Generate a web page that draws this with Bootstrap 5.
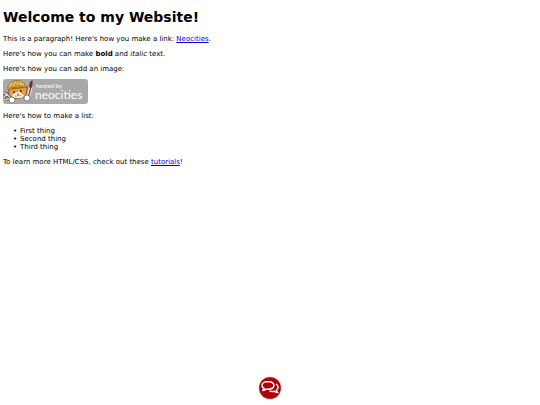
<!DOCTYPE html>
<html lang="en">
<head>
<meta charset="utf-8">
<meta name="viewport" content="width=device-width, initial-scale=1">
<title>Welcome to my Website!</title>
<link href="https://cdn.jsdelivr.net/npm/bootstrap@5.3.0/dist/css/bootstrap.min.css" rel="stylesheet">
<style>
body{font-family:"DejaVu Sans",Verdana,sans-serif;font-size:7px;line-height:8px;color:#000;background:#fff}
main{padding:9px 3px}
h1{font-size:14px;line-height:16px;margin-bottom:10px}
p,.things{margin-bottom:7px}
.things{list-style:none;padding-left:10px}
.things li{display:flex;gap:3px}
.things li::before{content:"•";width:4px}
main a{color:#0000e0}
.before-picture{margin-bottom:6px}
.picture{margin-bottom:8px}
.hosted{width:85px;height:25px}
.chat{width:24px;height:24px;margin-bottom:5px}
.chat svg{width:24px;height:24px}
</style>
</head>
<body class="min-vh-100 d-flex flex-column">
<main class="flex-grow-1">
  <h1 class="fw-bold">Welcome to my Website!</h1>
  <p>This is a paragraph! Here's how you make a link: <a href="#neocities">Neocities</a>.</p>
  <p>Here's how you can make <strong class="fw-bold">bold</strong> and <em>italic</em> text.</p>
  <p class="before-picture">Here's how you can add an image:</p>
  <div class="picture">
    <svg class="hosted d-block" viewBox="0 0 85 25" role="img" aria-label="hosted by neocities">
      <rect width="85" height="25" rx="3" fill="#a9a9a9"/>
      <!-- tools and paws -->
      <path d="M1 14l3 1 5 6M1 18l3-3M3 21l4-2" stroke="#444" stroke-width="3" fill="none"/>
      <path d="M1 14l3 1 5 6M1 18l3-3M3 21l4-2" stroke="#ddd" stroke-width="1.4" fill="none"/>
      <path d="M25 19L28 8" stroke="#fff" stroke-width="3"/>
      <path d="M25 19L28 8" stroke="#654638" stroke-width="1.3"/>
      <path d="M26.500 8q-.5-4 2.500-6.500 1 4-1 7.500z" fill="#8e2620" stroke="#4a2020" stroke-width=".6"/>
      <!-- cat -->
      <path d="M6 10L5.500 15q2 4.500 8.500 4.500 7 0 9-4l1.500-8-3 1z" fill="#ee9b45" stroke="#70401f" stroke-width=".7"/>
      <path d="M14 13q-3 1-5 3.500 2 2.700 6.500 2.700 4 0 6-2.700-3-1-5-4z" fill="#fff4e2"/>
      <path d="M5 11q-1-7 6-9 8-2 11 4l1 3q-4-2-9-1-5 0-9 3z" fill="#f3c34c" stroke="#8c601c" stroke-width=".8"/>
      <path d="M8 8l3-5M12 7l2-5M16 6V3M6 9q8-4 16-2" stroke="#ad7623" stroke-width=".8" fill="none"/>
      <circle cx="11" cy="13" r="1" fill="#402c20"/><circle cx="18" cy="12" r="1" fill="#402c20"/>
      <path d="M14 15h2l-1 1zM12 17q2 .8 3-1 1 1.500 3 .5" fill="none" stroke="#7a5140" stroke-width=".6"/>
      <circle cx="9" cy="21" r="3" fill="#fff" stroke="#635e59" stroke-width=".7"/>
      <circle cx="24" cy="19" r="3" fill="#fff" stroke="#635e59" stroke-width=".7"/>
      <g fill="#fff" font-family="Lato, sans-serif">
        <text x="33" y="9" font-size="6">hosted by</text>
        <text x="32" y="20" font-size="12">neocities</text>
      </g>
    </svg>
  </div>
  <p>Here's how to make a list:</p>
  <ul class="things">
    <li>First thing</li>
    <li>Second thing</li>
    <li>Third thing</li>
  </ul>
  <p>To learn more HTML/CSS, check out these <a href="#tutorials">tutorials</a>!</p>
</main>
<button type="button" class="chat border-0 bg-transparent p-0 align-self-center" aria-label="Chat">
  <svg class="d-block" viewBox="0 0 24 24" aria-hidden="true">
    <circle cx="12" cy="12" r="11.500" fill="#d3c4c4"/>
    <circle cx="12" cy="12" r="10.800" fill="#b00008"/>
    <path d="M18 8q3 2 1.500 5-.4.800-1.200 1.300.3 1.300 1.500 2.200-2.300 0-3.400-1.200-3 .6-5-.5" fill="none" stroke="#fff" stroke-width="1.500" stroke-linejoin="round"/>
    <path d="M10 5.500c-3.500 0-6 1.700-6 3.900 0 1.200.8 2.200 2.100 2.900-.1.900-.7 1.500-1.400 2.100 1.600 0 2.700-.5 3.600-1.200 4.400.6 7.700-1.200 7.700-3.800 0-2.200-2.600-3.900-6-3.900z" fill="#b00008" stroke="#fff" stroke-width="1.500" stroke-linejoin="round"/>
  </svg>
</button>
<script src="https://cdn.jsdelivr.net/npm/bootstrap@5.3.0/dist/js/bootstrap.bundle.min.js"></script>
</body>
</html>
